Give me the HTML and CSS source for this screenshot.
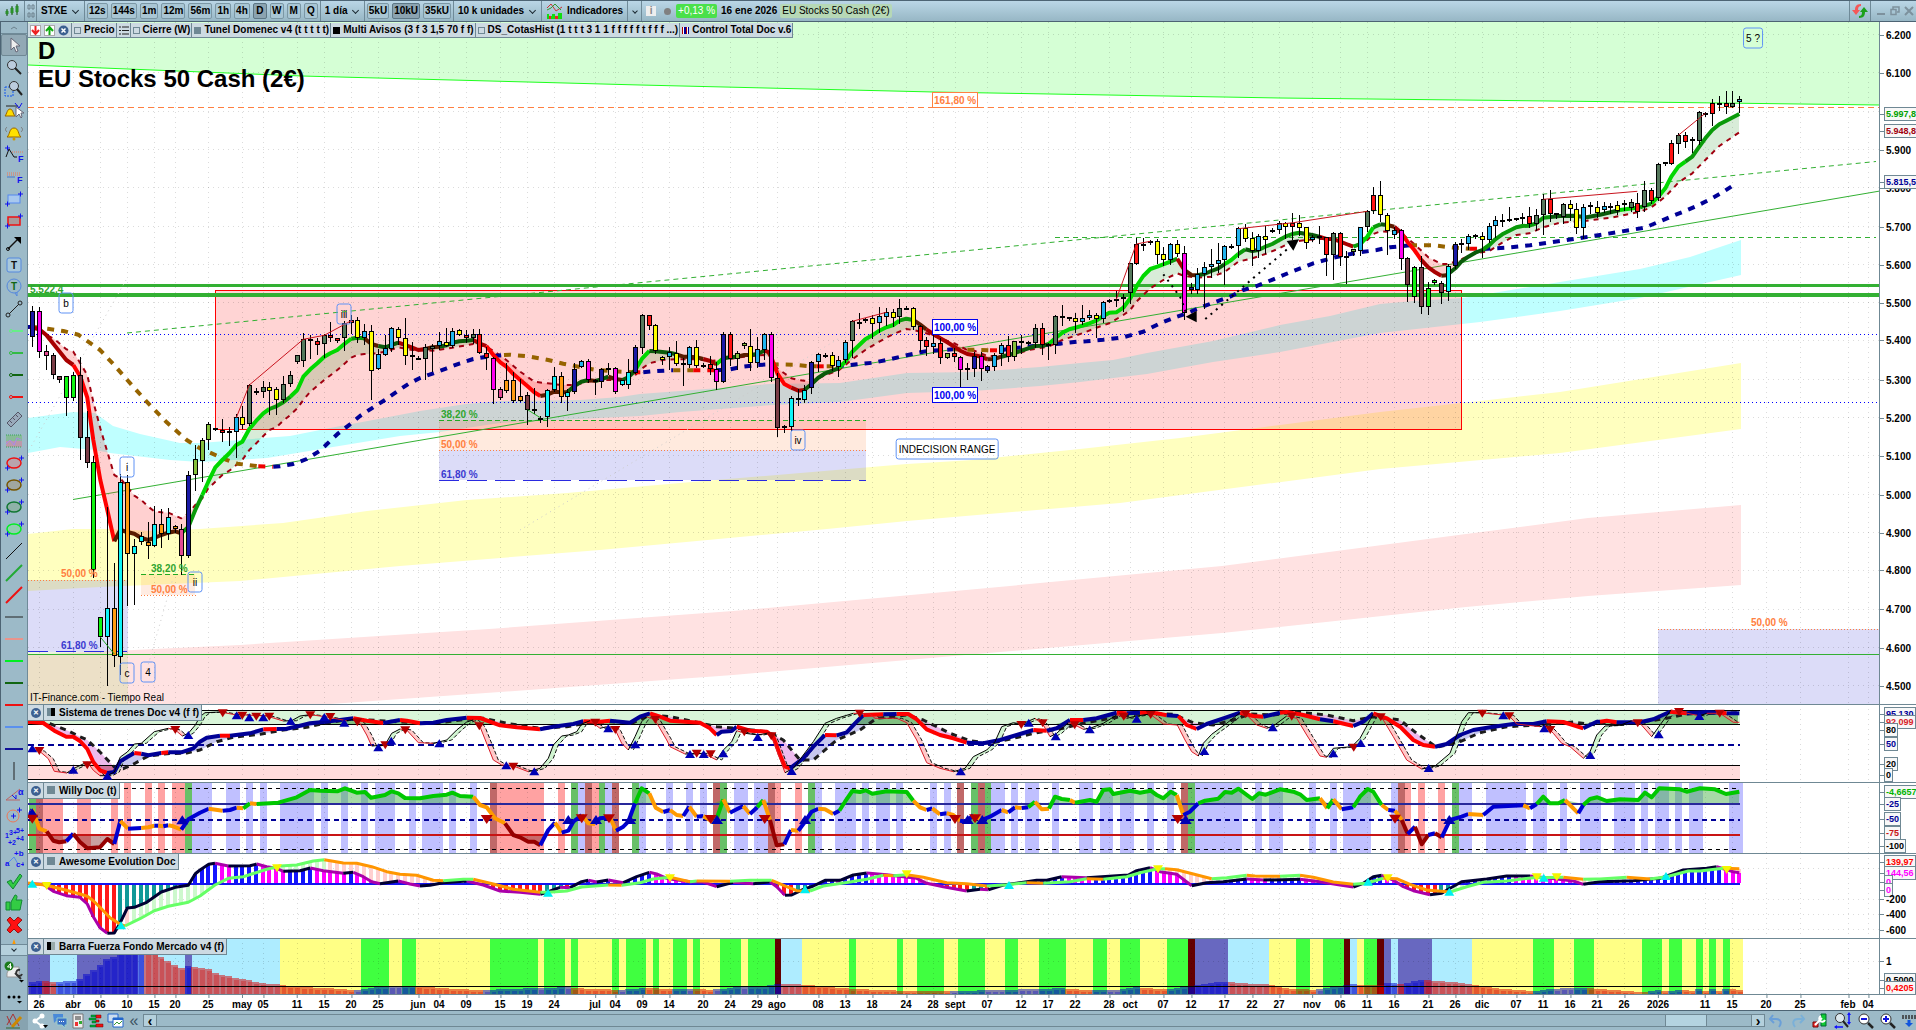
FILE: index.html
```html
<!DOCTYPE html>
<html lang="es">
<head>
<meta charset="utf-8">
<title>EU Stocks 50 Cash (2€)</title>
<link rel="stylesheet" href="styles.css">
</head>
<body>
<header class="topbar">
  <button class="icon-btn" aria-label="Tipo de gráfico"><svg width="16" height="16" viewBox="0 0 16 16"><path d="M3 6v7M8 3v9M13 1v11" stroke="#154a15"/><path d="M2 8h2v3H2zM7 5h2v5H7zM12 3h2v6h-2z" fill="#2a9a2a" stroke="#2a8a2a"/></svg></button>
  <button class="icon-btn link" aria-label="Vincular"><svg width="8" height="16" viewBox="0 0 8 16"><path d="M1 6V2h2v4zM5 6V2h2v4zM1 14v-4h2v4zM5 14v-4h2v4z" fill="none" stroke="#6d818d"/></svg></button>
  <label class="drop"><select aria-label="Valor"><option>STXE</option></select></label>
  <div class="group">
    <button>12s</button><button>144s</button><button>1m</button><button>12m</button><button>56m</button><button>1h</button><button>4h</button><button class="on">D</button><button>W</button><button>M</button><button>Q</button>
  </div>
  <label class="drop"><select aria-label="Periodo"><option>1 día</option></select></label>
  <div class="group">
    <button>5kU</button><button class="on">10kU</button><button>35kU</button>
  </div>
  <label class="drop"><select aria-label="Unidades"><option>10 k unidades</option></select></label>
  <button class="icon-btn indicators"><svg width="17" height="18" viewBox="0 0 17 18"><path d="M1 6l4-4 5 7 6-4" fill="none" stroke="#c33"/><path d="M1 8l4-2 4-4 6 6" fill="none" stroke="#393"/><path d="M1 17v-5h2v2h3v-2h3v2h3v-3h4v6z" fill="#1d1"/><path d="M3 14h2v3H3zM9 14h3v3H9z" fill="#e22"/></svg>Indicadores</button>
  <button class="icon-btn more" aria-label="Más indicadores"><i class="chev"></i></button>
  <span class="info">i</span>
  <span class="dot"></span>
  <span class="badge">+0,13 %</span>
  <span class="date">16 ene 2026</span>
  <span class="name">EU Stocks 50 Cash (2€)</span>
  <span class="spacer"></span>
  <button class="icon-btn swap" aria-label="Actualizar"><svg width="18" height="16" viewBox="0 0 18 16"><path d="M10 1c-5 0-6 3-6 6H1l4 5 4-5H7c0-3 1-4 3-4z" fill="#f45858"/><path d="M8 15c5 0 6-3 6-6h3l-4-5-4 5h2c0 3-1 4-3 4z" fill="#1ca01c"/></svg></button>
  <div class="win">
    <button aria-label="Minimizar"><svg width="10" height="10" viewBox="0 0 10 10"><path d="M1 8h8" stroke="#7d919d" stroke-width="2"/></svg></button>
    <button aria-label="Restaurar"><svg width="10" height="10" viewBox="0 0 10 10"><path d="M1 3.500h5v5H1zM3 3V1h6v5H7" fill="none" stroke="#7d919d" stroke-width="1.500"/></svg></button>
    <button aria-label="Cerrar"><svg width="10" height="10" viewBox="0 0 10 10"><path d="M1 1l8 8M9 1L1 9" stroke="#7d919d" stroke-width="2"/></svg></button>
  </div>
</header>

<main class="desk">
  <nav class="tools" aria-label="Herramientas de dibujo">
    <button class="fold" aria-label="Subir"><svg width="8" height="5" viewBox="0 0 8 5"><path d="M1 4l3-2 3 2" fill="none" stroke="#6d818d"/></svg></button>
    <div class="tool-list" id="tools"></div>
    <button class="fold down" aria-label="Bajar"><i class="chev"></i></button>
    <button class="tool tall" aria-label="Objetos"><svg width="22" height="22" viewBox="0 0 22 22"><path d="M7 6h9v10H4v-4z" fill="#eee" stroke="#999"/><circle cx="6" cy="5" r="4.500" fill="#1a7a1a"/><path d="M7.500 8V2.500L4.500 6H9" fill="none" stroke="#fff"/><path d="M12 12l6 6M17 9a3 3 0 1 0 2 4" fill="none" stroke="#333" stroke-width="2"/><path d="M16 19h5l-2.500 2.500z"/></svg></button>
    <button class="tool" aria-label="Más"><svg width="20" height="12" viewBox="0 0 20 12"><circle cx="5" cy="4" r="1.500"/><circle cx="10" cy="4" r="1.500"/><circle cx="15" cy="4" r="1.500"/><path d="M13 8h5l-2.500 2.500z"/></svg></button>
  </nav>

  <div class="work">
    <section class="panel price" id="price">
      <div class="plot"></div><div class="axis"></div>
      <ul class="tabs">
        <li class="bare"><svg width="11" height="11" viewBox="0 0 11 11"><rect x=".5" y=".5" width="10" height="10" fill="#fff" stroke="#aaa"/><path d="M5.500 1v8M2 5l3.500 4L9 5" stroke="#e22" stroke-width="2" fill="none"/></svg>
          <svg width="11" height="11" viewBox="0 0 11 11"><rect x=".5" y=".5" width="10" height="10" fill="#fff" stroke="#aaa"/><path d="M5.500 10V2M2 6l3.500-4L9 6" stroke="#1a1" stroke-width="2" fill="none"/></svg>
          <svg width="11" height="11" viewBox="0 0 11 11"><circle cx="5.500" cy="5.500" r="5" fill="#3c6090"/><path d="M3.500 3.500l4 4M7.500 3.500l-4 4" stroke="#fff" stroke-width="1.500"/></svg></li>
        <li><i class="sq"></i>Precio</li>
        <li><svg width="10" height="9" viewBox="0 0 10 9"><path d="M0 1h2M0 4.500h2M0 8h2M3 1h7M3 4.500h7M3 8h7" stroke="#222"/></svg></li>
        <li><i class="sq"></i>Cierre (W)</li>
        <li><i class="sq grey"></i>Tunel Domenec v4 (t t t t t)</li>
        <li><i class="sq black"></i>Multi Avisos (3 f 3 1,5 70 f f)</li>
        <li><i class="sq"></i>DS_CotasHist (1 t t t 3 1 1 f f f f f t f f f ...)</li>
        <li><i class="sq bars"></i>Control Total Doc v.6</li>
      </ul>
      <h1 class="heading">D<br>EU Stocks 50 Cash (2€)</h1>
      <p class="source">IT-Finance.com - Tiempo Real</p>
    </section>
    <section class="panel trains" id="trains"><div class="plot"></div><div class="axis"></div>
      <h2 class="chip"><span class="x">✕</span><span><i class="sq half"></i>Sistema de trenes Doc v4 (f f)</span></h2></section>
    <section class="panel willy" id="willy"><div class="plot"></div><div class="axis"></div>
      <h2 class="chip"><span class="x">✕</span><span><i class="sq grey"></i>Willy Doc (t)</span></h2></section>
    <section class="panel awesome" id="awesome"><div class="plot"></div><div class="axis"></div>
      <h2 class="chip"><span class="x">✕</span><span><i class="sq grey"></i>Awesome Evolution Doc</span></h2></section>
    <section class="panel force" id="force"><div class="plot"></div><div class="axis"></div>
      <h2 class="chip"><span class="x">✕</span><span><i class="sq halfb"></i>Barra Fuerza Fondo Mercado v4 (f)</span></h2></section>
    <div class="dates"><div class="days" id="days"></div></div>
  </div>
</main>

<footer class="bottombar">
  <button class="pen" aria-label="Dibujar"><svg width="20" height="18" viewBox="0 0 20 18"><path d="M3 4l4 9M3 13L9 2l6 12" fill="none" stroke="#a33"/><path d="M8 15l9-10" stroke="#c80" stroke-width="3"/><path d="M2 16h14" stroke="#363"/></svg></button>
  <button aria-label="Compartir"><svg width="18" height="16" viewBox="0 0 18 16"><path d="M4 8l7-5M4 8l7 5" stroke="#fff" stroke-width="2"/><circle cx="4" cy="8" r="2.500" fill="#fff"/><circle cx="11" cy="3" r="2.500" fill="#fff"/><circle cx="11" cy="13" r="2.500" fill="#fff"/><path d="M12 12h5l-2.500 3z"/></svg></button>
  <button aria-label="Chat"><svg width="16" height="16" viewBox="0 0 16 16"><path d="M1 1h10v7H4l-2 2z" fill="#4a8ad8"/><path d="M5 5h10v7h-2v3l-3-3H5z" fill="#3a72c8" stroke="#9cc"/><path d="M7 8.500h6" stroke="#fff" stroke-dasharray="1 1"/></svg></button>
  <button aria-label="Informe"><svg width="14" height="16" viewBox="0 0 14 16"><path d="M2 1h10v14H2z" fill="#eee" stroke="#777"/><path d="M4 4h6M4 6h6" stroke="#333"/><path d="M4 9h3v4H4z" fill="#e33"/><path d="M8 8h3v3H8z" fill="#3a3"/></svg></button>
  <button aria-label="Órdenes"><svg width="16" height="16" viewBox="0 0 16 16"><path d="M3 2h5v2H3zM1 5h7v2H1zM4 8h4v2H4zM2 12h6v2H2z" fill="#0a3" stroke="#063" stroke-width=".500"/><path d="M8 2h5v3H8zM8 7h3v2H8zM8 11h7v3H8z" fill="#e11" stroke="#700" stroke-width=".500"/></svg></button>
  <button aria-label="Ventanas"><svg width="18" height="16" viewBox="0 0 18 16"><path d="M1 1h10v8H1z" fill="#cde" stroke="#26c"/><path d="M6 5h10v9H6z" fill="#fff" stroke="#26c"/><path d="M6 6h10" stroke="#26c" stroke-width="2"/><path d="M7 12l3-3 2 2 3-3" stroke="#393" fill="none"/></svg></button>
  <button class="dbl" aria-label="Contraer">«</button>
  <div class="scroll"><button aria-label="Izquierda">‹</button><span class="track"><span class="thumb"></span></span><button aria-label="Derecha">›</button></div>
  <div class="right">
    <button aria-label="Deshacer"><svg width="16" height="16" viewBox="0 0 16 16"><path d="M5 2L2 6l4 4M2 6h6c5 0 6 4 3 8" fill="none" stroke="#6a9fd8" stroke-width="2"/></svg></button>
    <button aria-label="Rehacer"><svg width="16" height="16" viewBox="0 0 16 16"><path d="M11 2l3 4-4 4M14 6H8c-5 0-6 4-3 8" fill="none" stroke="#7ab0d8" stroke-width="2"/></svg></button>
    <button aria-label="Ajustes"><svg width="16" height="16" viewBox="0 0 16 16"><path d="M9 1h5v12H9z" fill="#1c3" stroke="#063"/><path d="M1 9h5v5H1z" fill="#e33" stroke="#700"/><path d="M3 12l7-7M9 3a3 3 0 1 0 4 4" stroke="#fff" stroke-width="2" fill="none"/></svg></button>
    <button aria-label="Zoom auto"><svg width="18" height="18" viewBox="0 0 18 18"><circle cx="6" cy="6" r="4.500" fill="#dce8ee" stroke="#333"/><path d="M9 9l5 6" stroke="#222" stroke-width="2"/><path d="M15 2v9M1 15h8" stroke="#11f" stroke-width="1.500"/><path d="M13 3l2-3 2 3zM13 10l2 3 2-3zM3 13l-3 2 3 2z" fill="#11f"/></svg></button>
    <button aria-label="Alejar"><svg width="16" height="16" viewBox="0 0 16 16"><circle cx="6" cy="6" r="5" fill="#fff" stroke="#333"/><path d="M10 10l5 5" stroke="#222" stroke-width="2.500"/><path d="M3 6h6" stroke="#11d" stroke-width="2"/></svg></button>
    <button aria-label="Acercar"><svg width="16" height="16" viewBox="0 0 16 16"><circle cx="6" cy="6" r="5" fill="#fff" stroke="#333"/><path d="M10 10l5 5" stroke="#222" stroke-width="2.500"/><path d="M3 6h6M6 3v6" stroke="#11d" stroke-width="2"/></svg></button>
    <button aria-label="Teclado"><svg width="14" height="14" viewBox="0 0 14 14"><path d="M0 2h14M0 4h14" stroke="#333" stroke-dasharray="2 1" stroke-width="1.500"/><path d="M7 6v4" stroke="#15d" stroke-width="3"/><path d="M3 9h8l-4 4z" fill="#15d"/></svg></button>
  </div>
</footer>
<script src="chart.js"></script>
</body>
</html>
```

FILE: styles.css
```css
* { box-sizing: border-box; }

html, body { height: 100%; margin: 0; }

body {
  display: flex;
  flex-direction: column;
  overflow: hidden;
  background: #9cbac8;
  color: #000;
  font: bold 10px/14px "Liberation Sans", Arial, sans-serif;
}

button, select {
  margin: 0;
  padding: 0;
  border: 0;
  background: none;
  color: inherit;
  font: inherit;
}

svg { flex: none; }

/* top bar */
.topbar {
  display: flex;
  align-items: stretch;
  flex: none;
  height: 22px;
  border-top: 1px solid #4d6474;
  border-bottom: 1px solid #4d6474;
  background: linear-gradient(#bad6e6, #97b7c5);
  white-space: nowrap;
}

.icon-btn {
  display: flex;
  align-items: center;
  justify-content: center;
  gap: 4px;
  padding: 0 4px;
  border-right: 1px solid #6f8a98;
}

.icon-btn.link { width: 12px; }
.icon-btn.more { width: 14px; padding: 0; }
.icon-btn.indicators { padding: 0 4px; }

.drop {
  display: flex;
  align-items: center;
  position: relative;
  border-right: 1px solid #6f8a98;
}

.drop select {
  appearance: none;
  height: 20px;
  padding: 0 16px 0 4px;
}

.drop::after, .chev {
  content: "";
  width: 4px;
  height: 4px;
  border: solid #1c2a33;
  border-width: 0 1px 1px 0;
  transform: rotate(45deg);
}

.drop::after {
  position: absolute;
  right: 6px;
  top: 7px;
}

.group {
  display: flex;
  align-items: center;
  gap: 3px;
  padding: 0 2px;
  border-right: 1px solid #6f8a98;
}

.group button {
  min-width: 14px;
  height: 16px;
  padding: 0 1px;
  border: 1px solid #7b97a5;
  border-radius: 2px;
  background: #a9c6d4;
}

.group .on { background: #8ba3b0; border-color: #5d7785; }

.info {
  align-self: center;
  width: 10px;
  height: 10px;
  margin-left: 4px;
  background: #eee;
  color: #888;
  line-height: 10px;
  text-align: center;
}

.dot {
  align-self: center;
  width: 7px;
  height: 7px;
  margin: 0 5px 0 8px;
  border-radius: 50%;
  background: #808080;
}

.badge {
  align-self: center;
  padding: 0 2px;
  border-radius: 2px;
  background: #4ae04a;
  color: #fff;
  font-weight: normal;
}

.date { align-self: center; margin: 0 3px 0 4px; }

.name {
  align-self: center;
  padding: 0 2px;
  border-radius: 2px;
  background: #b6d8b6;
  font-weight: normal;
}

.spacer { flex: 1; }
.swap { padding: 0 1px; border-left: 1px solid #6f8a98; }
.win { display: flex; align-items: center; gap: 4px; padding: 0 2px 0 5px; }
.win button { display: flex; }

/* middle */
.desk { display: flex; flex: 1; min-height: 0; }

.tools {
  display: flex;
  flex-direction: column;
  flex: none;
  width: 28px;
  border-left: 1px solid #4d6474;
  border-right: 1px solid #6f8a98;
  background: #9cbac8;
}

.fold {
  display: flex;
  align-items: center;
  justify-content: center;
  flex: none;
  height: 12px;
  border-bottom: 1px solid #6f8a98;
}

.fold.down { border-top: 1px solid #6f8a98; background: #b4d0dc; }
.fold.down .chev { margin-bottom: 2px; }
.tool-list { flex: 1; min-height: 0; overflow: hidden; }

.tool {
  display: flex;
  align-items: center;
  justify-content: center;
  flex: none;
  width: 26px;
  height: 22px;
}

.tool.on { border: 1px solid #6f8894; border-radius: 2px; background: #92a9b5; }
.tool.tall { height: 32px; }

.work {
  display: flex;
  flex-direction: column;
  flex: 1;
  min-width: 0;
  background: #fff;
}

.panel { display: flex; position: relative; min-height: 0; }
.panel + .panel::after {
  content: "";
  position: absolute;
  inset: 0 0 auto;
  height: 1px;
  background: #6f8894;
}

.price { flex: 682 0 0; }
.trains { flex: 78 0 0; }
.willy { flex: 71 0 0; }
.awesome { flex: 85 0 0; }
.force { flex: 56 0 0; }

.plot { flex: 1; position: relative; min-width: 0; overflow: hidden; }
.plot svg { display: block; position: absolute; width: 100%; height: 100%; }

.axis {
  flex: none;
  position: relative;
  width: 37px;
  overflow: hidden;
  border-left: 1px solid #6f8894;
}

.mark {
  position: absolute;
  left: 0;
  height: 14px;
  padding-left: 6px;
  line-height: 16px;
  white-space: nowrap;
  transform: translateY(-50%);
}

.mark::before {
  content: "";
  position: absolute;
  left: 0;
  top: 7px;
  width: 4px;
  height: 1px;
  background: #6f8894;
}

.mark.box {
  left: 4px;
  padding: 0 1px;
  border: 1px solid #6f8894;
  background: #f8f8f8;
  font-size: 9px;
  line-height: 13px;
}

.mark.box::before { left: -5px; top: 6px; }

.tag {
  position: absolute;
  height: 14px;
  line-height: 16px;
  white-space: nowrap;
  transform: translateY(-50%);
}
.tag.box {
  height: 16px;
  padding: 0 1px;
  border: 1px solid;
  background: #fff;
}
.note {
  position: absolute;
  min-width: 15px;
  height: 21px;
  padding: 0 2px;
  border: 1px solid #5f92f5;
  border-radius: 3px;
  font-weight: normal;
  line-height: 20px;
  text-align: center;
  white-space: nowrap;
  transform: translate(-50%, -50%);
}

.tabs {
  display: flex;
  position: absolute;
  left: 0;
  top: 1px;
  margin: 0;
  padding: 0;
  border-bottom: 1px solid #6f8894;
  background: #cddae2;
  list-style: none;
  white-space: nowrap;
}

.tabs li {
  display: flex;
  align-items: center;
  gap: 3px;
  height: 14px;
  padding: 0 1px 0 2px;
  border-right: 1px solid #6f8894;
}
.tabs .bare { padding: 0 2px; }

.sq {
  display: inline-block;
  flex: none;
  width: 7px;
  height: 7px;
  border: 1px solid #6f8894;
}
.sq.grey { background: #6f8894; }
.sq.black { background: #000; border-color: #000; }
.sq.half { border: 0; background: linear-gradient(90deg, #6f8894 50%, #000 50%); }
.sq.halfb { border: 0; background: linear-gradient(90deg, #000 50%, #9aa 50%); }
.sq.bars { border: 0; background: repeating-linear-gradient(90deg, #a00 0 1px, #fff 1px 2px, #009 2px 4px); }

.heading {
  position: absolute;
  left: 10px;
  top: 15px;
  margin: 0;
  font-size: 24px;
  line-height: 28px;
}

.source {
  position: absolute;
  left: 2px;
  bottom: 0;
  margin: 0;
  font-weight: normal;
  line-height: 12px;
}

.chip {
  display: flex;
  position: absolute;
  left: 0;
  top: 1px;
  z-index: 1;
  margin: 0;
  border: solid #6f8894;
  border-width: 0 1px 1px 0;
  background: #cddae2;
  font-size: 10px;
  line-height: 15px;
}
.chip span { padding: 0 2px 0 3px; }
.chip .sq { width: 8px; height: 8px; margin-right: 4px; }
.chip .x {
  width: 10px;
  height: 10px;
  margin: 3px 2px 2px 3px;
  padding: 0;
  border-radius: 50%;
  background: #3c6090;
  color: #fff;
  font-size: 7px;
  line-height: 10px;
  text-align: center;
}
.chip .x + span { border-left: 1px solid #6f8894; }

.dates {
  flex: none;
  height: 16px;
  padding-right: 37px;
  border-top: 1px solid #6f8894;
}
.days { position: relative; height: 100%; }
.day { position: absolute; top: 3px; transform: translateX(-50%); }
.day::before {
  content: "";
  position: absolute;
  left: 50%;
  top: -3px;
  width: 1px;
  height: 3px;
  background: #6f8894;
}

/* bottom bar */
.bottombar {
  display: flex;
  align-items: center;
  flex: none;
  gap: 3px;
  height: 20px;
  border-top: 1px solid #4d6474;
  background: #9cbac8;
}
.bottombar button { display: flex; align-items: center; justify-content: center; }
.bottombar .pen { width: 28px; height: 19px; background: #87a3b0; }
.bottombar .dbl { width: 12px; color: #3b5361; font-size: 16px; font-weight: normal; }
.scroll {
  display: flex;
  flex: 1;
  height: 13px;
  border: 1px solid #6f8894;
  background: #9cbac8;
}
.scroll button { width: 12px; background: #b4d0dc; font-size: 14px; line-height: 8px; }
.track { display: flex; justify-content: flex-end; flex: 1; padding-right: 2%; border: solid #6f8894; border-width: 0 1px; }
.thumb { width: 42px; margin-right: 12px; border: solid #6f8894; border-width: 0 1px; background: #b4d3e0; }
.right { display: flex; align-items: center; gap: 6px; }
```

FILE: chart.js
```js
const NS = 'http://www.w3.org/2000/svg';
const LEFT = 28, WIDTH = 1851, STEP = 6.774, FIRST = 32.3, BARS = 253;

/* Each block of readings has an origin; its values are thirds of a unit. */
const read = blocks => blocks.flatMap(([ox, oy, s]) => s.trim().split(/\s+/).map(t => {
  const m = t.match(/^(-?\d+),(-?\d+)([a-zA-Z]?)$/);
  return { x: ox + m[1] / 3, y: oy + m[2] / 3, c: m[3] };
}));

function at(series, x) {
  let i = 1;
  while (i < series.length - 1 && series[i].x < x) i++;
  const a = series[i - 1], b = series[i];
  const t = b.x === a.x ? 0 : Math.max(0, Math.min(1, (x - a.x) / (b.x - a.x)));
  return a.y + (b.y - a.y) * t;
}

class Plot {
  constructor(id, top, height) {
    this.top = top; this.height = height;
    this.box = document.querySelector('#' + id + ' .plot');
    this.axis = document.querySelector('#' + id + ' .axis');
    this.svg = document.createElementNS(NS, 'svg');
    this.svg.setAttribute('viewBox', `${LEFT} ${top} ${WIDTH} ${height}`);
    this.svg.setAttribute('preserveAspectRatio', 'none');
    this.box.append(this.svg);
  }
  add(tag, attrs) {
    const e = document.createElementNS(NS, tag);
    for (const k in attrs) e.setAttribute(k, attrs[k]);
    this.svg.append(e);
  }
  rect(x0, y0, x1, y1, fill, extra) {
    this.add('rect', { x: x0, y: y0, width: Math.max(0, x1 - x0), height: Math.max(0, y1 - y0), fill, 'shape-rendering': 'crispEdges', ...extra });
  }
  line(x0, y0, x1, y1, stroke, w = 1, dash = '') {
    const crisp = x0 === x1 || y0 === y1 ? 'crispEdges' : 'auto';
    this.add('line', { x1: x0, y1: y0, x2: x1, y2: y1, stroke, 'stroke-width': w, 'stroke-dasharray': dash, 'shape-rendering': crisp });
  }
  poly(points, attrs) {
    this.add('polyline', { points: points.map(p => p.x.toFixed(1) + ',' + p.y.toFixed(1)).join(' '), fill: 'none', ...attrs });
  }
  area(points, fill) { this.poly(points, { fill }); }
  curve(series, colors, w, dash = '') {
    let run = [series[0]], c = series[0].c;
    const flush = () => run.length > 1 && this.poly(run, { stroke: colors[c] || c, 'stroke-width': w, 'stroke-dasharray': dash, 'stroke-linejoin': 'round' });
    for (const p of series.slice(1)) {
      if (p.c && p.c !== c) { flush(); run = [run[run.length - 1]]; c = p.c; }
      run.push(p);
    }
    flush();
  }
  between(a, b, above, below, x0, x1) {
    let up = null, A = [], B = [];
    const flush = () => A.length > 1 && this.area([...A, ...B.reverse()], up ? above : below);
    for (let x = x0; x <= x1; x += 2) {
      const ya = at(a, x), yb = at(b, x), u = ya < yb;
      if (u !== up) { if (A.length) { A.push({ x, y: ya }); B.push({ x, y: yb }); } flush(); A = []; B = []; up = u; }
      A.push({ x, y: ya }); B.push({ x, y: yb });
    }
    flush();
  }
  tri(x, y, down, fill, r = 5) {
    const s = down ? -1 : 1;
    this.area([{ x: x - r, y: y + 4 * s }, { x: x + r, y: y + 4 * s }, { x, y: y - (r - 1) * s }], fill);
  }
  html(cls, x, y, text, color) {
    const e = document.createElement('span');
    e.className = cls; e.textContent = text;
    e.style.left = (x - LEFT) / WIDTH * 100 + '%';
    e.style.top = (y - this.top) / this.height * 100 + '%';
    if (color) e.style.color = color;
    this.box.append(e);
  }
  mark(y, text, color, boxed) {
    const e = document.createElement('span');
    e.className = boxed ? 'mark box' : 'mark'; e.textContent = text;
    e.style.top = (y - this.top) / this.height * 100 + '%';
    if (color) e.style.color = color;
    this.axis.append(e);
  }
}

const days = '26@39 abr@73 06@100 10@127 15@154 20@175 25@208 may@242 05@263 11@297 15@324 20@351 25@378 jun@418 04@439 09@466 15@500 19@527 24@554 jul@595 04@615 09@642 14@669 20@703 24@730 29@757 ago@777 08@818 13@845 18@872 24@906 28@933 sept@955 07@987 12@1021 17@1048 22@1075 28@1109 oct@1130 07@1163 12@1191 17@1224 22@1252 27@1279 nov@1312 06@1340 11@1367 16@1394 21@1428 26@1455 dic@1482 07@1516 11@1543 16@1570 21@1597 26@1624 2026@1658 11@1705 15@1732 20@1766 25@1800 feb@1848 04@1868'
  .split(' ').map(d => d.split('@'));
for (const [text, x] of days) {
  const e = document.createElement('span');
  e.className = 'day'; e.textContent = text;
  e.style.left = (x - LEFT) / WIDTH * 100 + '%';
  document.getElementById('days').append(e);
}
const grid = (p, ys) => {
  for (const [, x] of days) p.line(+x + .5, p.top, +x + .5, p.top + p.height, 'rgba(0,0,0,.14)', 1, '1 4');
  for (const y of ys) p.line(LEFT, y, 1880, y, 'rgba(0,0,0,.14)', 1, '1 4');
};

/* ---------- price ---------- */
const price = new Plot('price', 22, 682);
const xy = s => s.split(' ').map(t => { const [x, y] = t.split(',').map(Number); return { x, y }; });
const band = (top, bottom, fill) => price.area([...xy(top), ...xy(bottom).reverse()], fill);

band('28,418 73,412 95,413 113,426 140,434 180,443 200,443 290,436 330,428 373,420 420,411 466,404 500,401 580,400 620,397 640,394 680,391 770,384 840,383 907,373 973,372 1040,367 1080,363 1113,360 1147,353 1213,341 1280,325 1330,316 1380,304 1413,301 1463,298 1560,282 1640,269 1690,257 1741,240',
  '28,453 60,447 95,450 110,453 170,460 200,462 267,458 333,447 400,436 440,432 500,423 600,418 640,416 680,412 773,405 840,402 907,393 973,391 1040,386 1080,382 1147,374 1213,362 1280,352 1380,333 1480,322 1560,311 1640,298 1741,275', '#bfffff');
band('28,534 73,529 110,529 150,531 200,529 283,523 367,511 467,500 567,493 680,483 907,464 973,460 1080,449 1180,438 1280,425 1380,412 1480,401 1560,392 1741,363',
  '28,591 100,587 240,581 400,566 600,550 827,529 907,521 1120,503 1380,469 1560,453 1741,429', '#ffffbf');
band('28,655 240,645 489,629 733,611 977,589 1222,566 1466,534 1588,518 1741,505',
  '28,720 330,704 500,692 733,675 977,654 1222,633 1466,607 1588,596 1741,585', '#ffe2e2');

const roof = xy('28,65 302,76 640,85 934,92 1280,98 1640,102 1880,105');
price.area([{ x: 28, y: 22 }, { x: 1880, y: 22 }, ...[...roof].reverse()], '#d5ffd5');

price.rect(28, 580, 127.5, 652, 'rgba(80,80,220,.2)');
price.rect(28, 652, 127.5, 704, 'rgba(180,220,120,.25)');
price.rect(141, 574, 195, 595, 'rgba(255,130,60,.15)');
price.rect(439, 420, 866, 450, 'rgba(255,130,60,.17)');
price.rect(439, 450, 866, 480, 'rgba(80,80,220,.2)');
price.rect(1658, 629, 1880, 704, 'rgba(80,80,220,.2)');
price.rect(215.5, 290.5, 1461.5, 429.5, 'rgba(255,70,70,.23)', { stroke: '#f00' });

const levels = Array.from({ length: 18 }, (_, i) => 34.5 + Math.round(i * 38.3));
grid(price, levels);

price.poly(roof, { stroke: '#1eff1e', 'stroke-width': 1 });
price.line(28, 107.5, 1880, 107.5, '#ff8040', 1, '6 4');
price.line(28, 285.5, 1880, 285.5, '#33b033', 3);
price.line(28, 295, 1880, 295, '#33b033', 4);
price.line(28, 334.5, 1880, 334.5, '#00f', 1, '1 3');
price.line(28, 402.5, 1880, 402.5, '#00f', 1, '1 3');
price.line(28, 654.5, 1880, 654.5, '#33b033');
price.line(73, 499.5, 1880, 191, '#33b033');
price.line(127, 333, 1876, 161.5, '#33b033', 1, '5 4');
price.line(1055, 237.5, 1876, 237.5, '#33b033', 1, '5 4');
for (const [a, b, c, d] of [[126, 280, 28, 452], [520, 530, 853, 330], [147, 669, 173, 578]]) price.line(a, b, c, d, '#ccc', 1, '1 4');
price.line(28, 580.5, 127, 580.5, '#ff8040', 1, '1 2');
price.line(28, 651.5, 127, 651.5, '#2a2ae0', 1, '20 8');
price.line(141, 574.5, 195, 574.5, '#2a2', 1, '5 3');
price.line(141, 595.5, 196, 595.5, '#ff8040', 1, '1 2');
price.line(439, 420.5, 866, 420.5, '#2a2', 1, '5 3');
price.line(439, 450.5, 866, 450.5, '#ff8040', 1, '1 2');
price.line(439, 480.5, 866, 480.5, '#2a2ae0', 1, '20 8');
price.line(1658, 629.5, 1880, 629.5, '#ff8040', 1, '1 2');

const fast = read([
  [0, 20, '90,921 118,928D 139,945 199,1020 220,1035D 241,1070R 262,1133 280,1260 301,1380 322,1470 343,1564 361,1530B 382,1536 403,1541 424,1554 445,1560 463,1554 484,1545 505,1538 526,1534 544,1540 565,1521G 586,1470'],
  [200, 230, '7,795 25,755L 46,712 67,690 88,670 109,645 127,635 148,597 169,572 190,550 208,537 229,529G 250,517 271,500 292,480L 310,440 331,418 352,400 373,380 391,370 412,360 433,342 454,326 472,323G 493,325 514,342B 535,348 556,352K 574,345 595,338 616,345D 637,353 655,360 676,357 697,352B 718,350 739,346K 757,338 778,334 799,332 820,330 838,340D 859,348 880,375R 901,397 919,410 940,432 961,450 982,468 1003,487 1021,498 1042,494B 1063,485 1084,487 1102,487 1123,468K 1144,455 1165,450 1186,453B 1204,448K 1225,440 1246,447B 1267,450 1285,442K 1306,420 1327,385L 1348,363 1366,364K 1387,366 1408,368 1429,373'],
  [640, 230, '130,380B 148,380 169,382 190,387 211,393D 229,403 250,385L 271,382K 292,380 313,375B 331,375 352,372K 373,362 385,366D 394,382 412,430R 433,462 454,473 475,482D 493,480 514,463K 535,443 556,430 577,422 595,415 616,395L 637,365 658,345 676,328 697,316 718,302 739,292 760,285 778,272 799,266G 820,270 841,284B 859,298 880,312D 901,325 922,337 943,350 961,362 982,372 1003,376 1024,380 1042,388 1063,387B 1084,380 1105,375K 1123,370 1144,362 1165,355 1186,348 1207,347 1225,343 1246,325L 1267,308 1288,298 1306,293 1327,287 1348,280 1369,272 1390,258 1408,248'],
  [1080, 170, '109,427 130,413 151,385 172,345 190,318 211,297 232,290 250,283 271,275 292,266G 313,300D 334,315B 352,316 373,312K 394,303 415,295 433,283 454,270L 475,252 496,238G 517,243K 535,240 556,230G 577,222 598,210 616,200 637,192 658,188 679,192K 697,195 718,200 739,207D 760,207 781,215 799,222 820,230 841,222G 862,200L 880,172 901,163G 922,165K 943,170B 964,188D 982,215R 1003,240 1024,270 1045,292D 1063,305 1084,317 1100,316B 1126,295K 1144,275 1165,260 1186,248 1207,240 1228,225G 1246,208 1267,193 1288,182 1309,172 1327,168 1348,167 1369,160 1390,143 1411,141 1440,138K 1480,137 1520,142 1560,134 1620,120'],
  [1640, 0, '0,622L 34,611G 55,590L 76,565 94,530 115,500 136,485 157,470G 178,440 196,415 217,390 238,373 259,362 298,342']
]);
const mid = read([
  [0, 20, '90,921 118,930 139,945 160,955 178,970 199,988 220,995 241,1030 262,1065 280,1145 301,1225 322,1295 343,1365 361,1375 382,1400 403,1427 424,1440 445,1460 463,1474 484,1477 505,1478 526,1487 544,1495 565,1480 586,1455'],
  [200, 230, '7,805 25,775 46,755 67,735 88,722 109,705 127,690 148,660 169,640 190,618 208,600 229,592 250,572 271,555 292,535 310,510 331,485 373,450 412,420 454,383 472,375 493,372 514,372 535,368 556,365 595,352 637,360 697,362 757,353 820,342 859,350 880,362 919,390 961,425 1003,455 1042,460 1084,465 1123,465 1165,455 1204,450 1246,450 1285,447 1306,435 1327,415 1348,400 1387,390'],
  [640, 230, '109,388 169,388 211,393 250,390 313,380 373,375 394,385 412,415 433,430 454,445 475,450 493,452 514,455 556,435 595,422 637,388 676,360 718,335 760,312 799,297 820,300 859,310 901,325 943,340 982,360 1003,362 1042,378 1084,378 1123,375 1165,360 1225,350 1267,330 1327,310 1369,293'],
  [1080, 170, '88,460 130,435 151,420 169,395 211,355 250,330 292,310 313,318 352,323 394,320 433,307 475,275 517,265 556,252 598,235 637,215 679,210 718,207 760,205 820,228 862,210 880,192 901,184 943,187 964,190 1003,222 1045,262 1084,282 1105,282 1144,268 1186,250 1228,243 1267,218 1309,195 1348,190 1390,172 1440,158 1520,152 1600,142'],
  [1640, 0, '0,635 34,622 76,590 115,548 157,520 196,480 238,438 298,397']
]);
const slow = read([
  [0, 20, '84,921n 100,921 143,926o 190,933 235,944 300,990 340,1032 382,1080 440,1145 500,1207 560,1260'],
  [200, 230, '0,655 35,670 75,688 112,701 175,709 220,710r 240,709n 280,702 320,687 360,662 380,643 415,610 450,583 480,558 520,532 550,513 590,485 625,462 660,444 700,430 740,415 780,400 820,387 860,380 912,375 930,374o 985,379 1045,390 1090,401 1140,411 1190,420 1240,424 1300,427 1330,427r 1360,424n 1410,421'],
  [640, 230, '100,421 160,421o 230,421r 270,418n 310,410 350,405 395,403 460,404o 500,408 530,409 560,409r 590,409o 600,408n 650,403 700,398 750,388 800,376 860,363 940,358 1050,361o 1080,361r 1120,355n 1180,348 1210,346 1260,341 1310,335'],
  [1080, 170, '20,514 70,509 130,502 190,485 240,460 290,440 320,430 350,417 400,398 450,380 490,360 530,348 580,328 640,303 700,280 760,263 800,254 840,247 890,240 930,232 990,226 1060,226o 1110,232 1170,236 1210,237r 1280,233n 1350,226 1440,213 1560,195'],
  [1640, 0, '14,683 55,666 92,650 130,635 170,618 206,600 243,580 281,555 292,552']
]);
price.between(fast, mid, 'rgba(60,160,60,.2)', 'rgba(255,60,60,.24)', 39, 1739);
price.curve(mid.map(p => ({ ...p, c: 'm' })), { m: '#a00010' }, 2, '5 5');
price.curve(slow, { n: '#000096', o: '#966400', r: '#f00000' }, 4, '7 7');
price.curve(fast, { '': '#600', D: '#a80000', R: '#ff0000', B: '#5a1c00', G: '#0a9a0a', L: '#00d800', K: '#0a5a0a' }, 4);

const candles = [
  [0, 20, `97,858,978,873,951n 118,862,1010,873,996m 139,975,1046,993,1008e 160,1000,1075,1005,1064w 178,1068,1085,1069,1079w 199,1068,1185,1069,1133g 220,1055,1140,1066,1133g 241,1010,1317,1066,1253w 262,1172,1340,1251,1328w 280,1308,1670,1326,1649g 301,1790,1878,1792,1850g 322,1460,1994,1765,1850c 343,1629,1937,1765,1909o 361,1362,1962,1387,1912c 382,1366,1754,1387,1603o 403,1557,1752,1579,1603c 424,1536,1573,1549,1567c 445,1507,1614,1566,1577o 463,1458,1579,1512,1577c 484,1466,1580,1513,1543o 505,1464,1557,1492,1543c 526,1516,1536,1519,1528o 544,1511,1661,1528,1609e 565,1353,1610,1365,1609n 586,1275,1411,1318,1366l`],
  [200, 230, `7,625,753,630,692l 25,577,657,583,631l 46,593,600,595,600x 67,567,632,600,610r 88,590,645,602,610u 109,552,681,561,605u 127,528,594,562,584y 148,462,585,465,583s 169,475,492,482,487r 190,453,502,472,487s 208,455,553,472,482y 229,470,553,478,511y 250,437,515,463,511s 271,423,467,436,463s 292,375,398,376,395s 310,309,407,328,392s 331,315,383,328,334s 352,325,371,334,344r 373,312,380,316,343s 391,275,334,316,325r 412,323,336,325,334r 433,272,360,280,325s 454,255,310,270,280r 472,262,337,271,325y 493,282,343,304,325u 514,286,507,303,422y 535,358,418,373,418u 556,315,375,355,374u 574,292,362,295,356u 595,292,343,298,325y 616,264,402,325,377y 637,337,417,374,378x 655,378,388,384,388x 676,343,447,352,388s 697,343,424,348,356s 718,306,358,334,347u 739,295,348,335,347y 757,295,352,304,347u 778,298,315,301,314y 799,301,335,314,325r 820,298,340,313,325s 838,297,370,313,368r 859,350,418,370,385r 880,380,518,385,479m 901,470,507,478,505e 919,400,487,451,482o 940,427,517,451,512o 961,447,514,497,512o 982,487,581,496,539w 1003,474,548,537,541x 1021,558,577,563,571w 1042,478,588,481,562c 1063,411,483,438,481c 1084,427,516,438,500o 1102,478,539,485,500c 1123,400,490,416,485n 1144,391,412,394,410u 1165,387,455,394,450m 1186,448,491,449,455o 1204,415,471,418,455n 1225,400,433,413,418x 1246,411,490,415,485m 1267,449,464,449,464c 1285,386,473,427,464c 1306,346,430,352,428n 1327,252,368,256,353s 1348,255,296,256,287r 1366,283,370,286,362y 1387,378,403,382,391y 1408,350,418,366,382u 1429,334,406,368,401y`],
  [640, 230, `130,385,465,400,406y 148,348,411,352,406u 169,331,412,352,407y 190,400,412,404,409u 211,379,433,403,418r 229,397,477,418,455m 250,306,455,313,455n 271,306,405,313,388r 292,362,417,368,388l 313,335,355,340,349l 331,297,420,349,398y 352,322,412,358,398u 373,309,388,311,360u 394,305,452,311,443m 412,430,618,443,594w 433,585,606,589,592x 454,499,600,505,590c 475,478,524,504,506x 493,465,515,479,509c 514,392,489,397,475n 535,368,423,373,397u 556,368,380,375,378x 577,365,420,375,409y 595,377,438,391,410u 616,330,396,335,391u 637,269,380,274,334s 658,248,294,275,278x 676,265,275,267,271s 697,255,325,265,281y 718,231,306,259,280u 739,235,284,247,260u 760,237,287,247,263y 778,208,278,235,260s 799,228,238,234,236x 820,232,298,235,290y 841,285,362,289,332r 859,320,375,331,350r 880,315,368,339,350u 901,325,398,340,383r 922,370,383,370,383l 943,355,393,370,382r 961,378,468,382,419m 982,400,447,415,418x 1003,365,437,378,416n 1024,365,449,378,418m 1042,405,425,408,422n 1063,370,419,374,410u 1084,338,404,346,373u 1105,318,392,346,380r 1123,332,389,334,380l 1144,316,370,333,340r 1165,333,343,336,341x 1186,283,350,295,338s 1207,278,372,295,346r 1225,340,387,342,348x 1246,256,368,259,344s 1267,225,285,259,263x 1288,260,269,262,266x 1306,250,305,265,277y 1327,225,281,265,277u 1348,240,268,256,264u 1369,248,320,256,266y 1390,212,275,217,266u 1408,207,215,210,214x 1429,183,228,208,211x`],
  [1080, 170, `130,372,422,380,388u 151,278,400,280,370s 169,204,281,222,281r 190,205,240,223,226x 211,210,222,214,220l 232,208,278,213,254y 250,230,285,253,271y 271,219,283,223,271u 292,211,257,223,251y 313,228,446,250,430m 334,340,368,352,360n 352,295,370,313,361u 373,275,415,290,313u 394,238,320,283,290u 415,219,307,271,283u 433,225,342,229,271u 454,223,234,227,230x 475,170,262,175,229u 496,162,214,175,206y 517,186,284,205,244y 535,193,260,199,244u 556,168,250,199,211y 577,174,187,181,184x 598,153,189,160,181u 616,155,204,160,172y 637,129,208,160,172r 658,136,196,160,175y 679,170,234,172,218y 697,195,212,200,209u 718,167,220,198,203r 739,200,314,202,254r 760,185,326,190,254s 781,187,285,190,260r 799,242,338,258,262x 820,237,254,238,246l 841,170,254,172,244u 862,120,184,124,172s 880,52,128,76,124r 901,33,154,76,135y 922,130,252,135,184y 943,170,204,181,196u 964,176,296,181,266m 982,261,392,265,345w 1003,288,395,290,380g 1024,257,428,290,412w 1045,337,432,355,412g 1063,328,342,331,338g 1084,333,399,338,370w 1105,283,390,289,367c 1126,215,294,223,289n 1144,207,247,220,224x 1165,193,237,199,221u 1186,193,205,196,200x 1207,187,260,199,211y 1228,160,217,169,211u 1246,139,200,151,169u 1267,133,168,150,152x 1288,111,152,147,151x 1309,145,150,145,147x 1327,130,160,140,146s 1348,110,170,139,163r 1369,118,180,136,163s 1390,73,192,88,136s 1411,60,153,88,133r 1429,130,145,130,136x 1450,100,160,103,142s 1471,90,150,103,118y 1489,100,190,118,174y 1510,102,205,112,174u 1531,96,130,106,112y 1552,92,140,112,128y 1573,95,125,108,120u 1591,98,128,108,114r 1612,94,132,104,122y 1633,90,120,100,104x 1654,86,122,96,114s 1672,70,140,100,126r`],
  [1640, 0, `13,543,632,571,622s 34,565,608,571,602r 55,489,600,493,595s 76,485,495,487,491x 94,420,492,430,491r 115,399,459,406,431s 136,397,440,406,425r 157,410,455,418,424s 178,333,433,337,422s 196,336,348,340,344r 217,297,375,310,341r 238,288,329,309,312x 259,273,338,309,320r 277,273,320,308,320s 298,288,336,298,307u`]
];
const tint = { n: '#1a1aa6', m: '#ff00f0', e: '#e24a92', w: '#7a3c46', g: '#10f510', c: '#10f4f8', o: '#ff9a10', l: '#84c03c', s: '#55785c', y: '#ffff00', r: '#ff1414', u: '#22b4ee', x: '#000' };
for (const [ox, oy, s] of candles) for (const t of s.split(' ')) {
  const [x, hi, lo, top, bottom] = t.slice(0, -1).split(',').map(Number);
  const cx = Math.floor(ox + x / 3) + .5, px = v => Math.round(oy + v / 3) + .5;
  price.line(cx, px(hi) - .5, cx, px(lo) + .5, '#000');
  price.rect(cx - 2, px(top), cx + 2, Math.max(px(top) + 1, px(bottom) - 1), tint[t.slice(-1)], { stroke: '#000' });
}
const peaks = [[[200, 230, '109,563 148,465 310,328 373,316 454,272']], [[640, 230, '637,274 739,247']], [[1080, 170, '109,388 169,222 211,214']], [[1080, 170, '475,176 640,158 862,124']], [[1080, 170, '1390,88 1672,64']], [[1640, 0, '115,406 196,340']]];
for (const p of peaks) price.poly(read(p), { stroke: '#c8141e' });
price.line(527.5, 409.7, 540.3, 417.7, '#2a2');
price.line(100.3, 637, 114.3, 654, '#2a2');
price.poly(read([[1080, 170, '250,313 283,357 304,387 318,430']]), { stroke: '#000', 'stroke-width': 2, 'stroke-dasharray': '2 5' });
price.poly(read([[1080, 170, '376,447 640,222']]), { stroke: '#000', 'stroke-width': 2, 'stroke-dasharray': '2 5' });
price.area(read([[1080, 170, '350,422 317,440 350,457']]), '#000');
price.area(read([[1080, 170, '657,208 620,213 640,242']]), '#000');

for (const [x, y, t] of [[66, 303, 'b'], [127, 467, 'i'], [195, 582, 'ii'], [127, 673, 'c'], [148, 672, '4'], [344, 314, 'iii'], [798, 440, 'iv'], [947, 449, 'INDECISION RANGE'], [1753, 38, '5 ?']]) price.html('note', x, y, t);
for (const [x, y, t, c] of [[61, 573, '50,00 %', '#ff8040'], [61, 645, '61,80 %', '#3a3ad0'], [151, 568, '38,20 %', '#2fa52f'], [151, 589, '50,00 %', '#ff8040'], [441, 414, '38,20 %', '#2fa52f'], [441, 444, '50,00 %', '#ff8040'], [441, 474, '61,80 %', '#3a3ad0'], [1751, 622, '50,00 %', '#ff8040'], [30, 289, '5.522,4', '#2fa52f']]) price.html('tag', x, y, t, c);
price.html('tag box', 932, 100, '161,80 %', '#ff8040');
price.html('tag box', 932, 327, '100,00 %', '#0000f0');
price.html('tag box', 932, 395, '100,00 %', '#0000f0');

levels.forEach((y, i) => i !== 2 && price.mark(y, String((62 - i) / 10).replace(/^(\d)$/, '$1.0') + '00'));
price.mark(114, '5.997,8', '#00a000', true);
price.mark(131, '5.948,8', '#a00010', true);
price.mark(182, '5.815,5', '#000096', true);

/* ---------- trains ---------- */
const trains = new Plot('trains', 704, 78);
trains.rect(28, 710, 1740, 724, '#d9f5d9');
trains.rect(28, 765, 1740, 779, '#ffdcdc');
grid(trains, []);
const thick = read([
  [0, 700, '84,65r 130,69 163,92 199,110 220,110 240,123 262,147 280,186 300,211 322,219 343,216n 361,184 382,171 403,159 424,161r 445,166n 484,159 505,157r 544,157n 580,145'],
  [200, 700, '0,125 20,113 60,107 90,107r 150,100n 190,88 230,87r 260,86n 300,77 330,70 370,66 420,60 460,55 500,62r 550,69 600,60n 620,62r 660,70 700,68n 740,60 800,53 840,54r 900,76 950,82 1020,88 1060,80n 1120,72 1150,64 1200,65r 1230,62 1290,68n 1320,50 1350,40 1380,50r'],
  [670, 700, '0,62 90,68 120,85 140,105 155,95n 185,93 200,80 240,92r 290,95 310,110 330,165 345,200 360,205 400,175n 430,140 465,105 500,106r 530,97n 555,70 580,45 640,43r 680,42n 715,42r 740,58 770,88 810,105 850,115 890,128 940,130n 990,120 1040,105 1090,90 1130,92r 1160,85n 1200,60 1240,60r 1280,55n 1340,38 1370,40r'],
  [1140, 700, '0,38n 50,40r 80,46 115,48n 140,75r 170,87 200,72n 250,55 300,38 340,48r 370,50 420,38n 440,36r 490,45 540,58 580,64n 640,78r 670,65n 700,40 740,55r 780,80 820,120 850,135 885,140 920,132n 960,105 1000,90 1060,80 1120,72 1180,72 1220,64 1270,66r 1330,85 1370,65n'],
  [1600, 690, '0,95 20,92r 50,97 120,97n 160,88 210,65 260,70r 320,66n 350,68 380,70r 418,70n']
]);
const signal = read([
  [0, 700, '84,64 150,71 199,90 240,110 262,120 300,156 343,201 370,206 403,191 445,168 500,161 560,159'],
  [200, 700, '0,150 50,125 100,112 180,103 250,90 320,82 380,68 460,57 540,62 640,68 720,68 800,58 850,55 920,70 1020,85 1100,80 1160,70 1230,65 1300,68 1350,45'],
  [670, 700, '0,50 60,62 140,80 200,85 290,95 340,120 390,180 430,180 500,120 570,90 620,55 710,45 760,60 840,100 900,122 960,130 1030,115 1100,98 1180,85 1240,70 1320,55 1400,42'],
  [1140, 700, '0,40 100,43 160,68 220,75 280,60 330,42 400,45 470,36 560,45 640,62 700,50 780,60 830,100 890,142 960,125 1020,98 1100,80 1200,75 1300,66 1370,75'],
  [1600, 690, '0,100 120,97 200,85 260,72 418,68']
]);
const thin = read([
  [0, 700, '97,149 118,153r 145,176 163,214 200,219 220,206k 262,186 280,211r 300,227 322,227k 343,216 361,171 382,156 403,132 424,130 463,95 505,85 526,90r 547,108 565,100k 586,75'],
  [200, 700, '0,50 15,38 60,36 110,45r 120,44k 200,48r 250,63 275,62k 300,48 330,44 375,50r 440,62 460,58k 480,70r 500,105 515,138 555,135k 575,100 600,87 620,90r 655,128 700,130 740,120k 770,90 800,66 820,60 840,80r 880,180 905,195 940,198 985,215 1020,205k 1045,175 1060,135 1085,108 1105,105 1130,95 1145,72 1170,62 1200,85r 1220,80k 1245,88r 1265,130 1285,150 1305,110k 1325,65 1340,50 1365,60r 1400,120'],
  [670, 700, '0,140 45,162 100,160k 140,180r 160,150k 185,125 200,92 225,100r 265,105k 300,98 320,150r 345,218 370,205k 400,165 430,125 465,70 500,55 550,40 600,42r 615,55 680,55 710,68 740,120 770,188 810,205 850,215 885,205k 910,170 950,150 975,125 995,80 1030,68 1055,72 1095,55 1120,75r 1140,110 1160,100k 1195,68 1215,75r 1240,88 1260,85k 1300,70 1340,45 1370,55r 1400,48k'],
  [1140, 700, '30,42 70,72r 112,75 135,120 155,155 175,168 190,130k 215,103 260,70 300,38 320,45r 350,75 380,85 400,78k 440,48 470,55r 500,105 540,168 560,172 580,145k 635,140 660,115 700,42 730,60r 760,110 800,180 845,207 885,198k 930,160 950,105 965,65 985,38 1020,38 1090,45r 1105,45 1130,72 1200,80 1215,75k 1240,100r 1265,130 1290,140 1330,175 1350,155k 1370,105 1395,78 1440,76 1475,62'],
  [1600, 690, '120,100r 155,140 180,105k 213,60 240,65r 300,78 320,70k 360,70r 400,97 418,97']
]);
trains.between(thick, signal, 'rgba(130,130,220,.45)', 'rgba(225,140,225,.6)', 28, 1739);
const over = thick.map(p => ({ x: p.x, y: Math.min(p.y, 724) })), zone = [{ x: 28, y: 724.2 }, { x: 1740, y: 724.2 }];
trains.between(over, zone, 'rgba(40,140,40,.5)', 'none', 28, 1739);
trains.area([...thick.map(p => ({ x: p.x, y: Math.max(p.y, 765) })), { x: 1739, y: 765 }, { x: 28, y: 765 }], 'rgba(160,30,60,.4)');
const late = thin.map(p => ({ x: p.x + 5, y: p.y, c: 'k' })).filter(p => p.x < 1740);
trains.between(thin, late, 'rgba(140,230,140,.4)', 'rgba(255,120,120,.4)', 40, 1739);
for (const y of [710.5, 724.5, 765.5, 779.5]) trains.line(28, y, 1740, y, '#000');
trains.line(28, 744.5, 1740, 744.5, '#000096', 2, '6 4');
trains.curve(late, { k: '#111' }, 1, '4 2');
trains.curve(signal.map(p => ({ ...p, c: 'k' })), { k: '#1c1c1c' }, 3, '6 5');
trains.curve(thick, { r: '#ff0000', n: '#000096' }, 4);
trains.curve(thin, { '': '#111', k: '#000', r: '#d81e28' }, 1);
const flags = (p, blocks, up, down, r) => read(blocks).forEach(t => p.tri(t.x, t.y, t.c === 'd', t.c === 'd' ? down : up, r));
flags(trains, [
  [0, 700, '97,145u 118,153d 220,209u 262,196d 322,227u 526,90d 565,105u'],
  [200, 700, '68,40d 110,46u 127,47d 148,52u 169,50d 190,52u 208,50d 272,63u 331,46d 373,51u 391,51d 433,68u 472,67d 535,142u 556,136d 574,122u 616,91d 718,130u 838,79d 919,196u 940,200d 1003,214u 1186,68d 1225,85u 1246,90d 1306,133u 1366,60d'],
  [670, 700, '60,162u 80,161d 101,162u 122,163d 160,160u 223,97d 263,111u 304,109d 365,213u 569,41d 872,214u 1054,75d 1076,68u 1118,70d 1157,109u 1214,76d 1259,88u 1361,50d 1400,56u'],
  [1140, 700, '32,45d 193,153u 317,43d 398,82u 455,50d 580,160u 641,143d 662,129u 722,52d 866,204u 1027,41d 1090,46u 1108,49d 1213,85u 1231,90d 1351,165u 1493,70d'],
  [1600, 690, '176,133u 237,66d 298,78u 359,71d']
], '#0000b4', '#b40000');
trains.mark(714, '95,130', '#000096', true);
trains.mark(722, '92,099', '#d81e28', true);
trains.mark(730, '80', '', true);
trains.mark(744, '50', '#000096', true);
trains.mark(764, '20', '', true);
trains.mark(775, '0', '', true);

/* ---------- willy ---------- */
const willy = new Plot('willy', 782, 71);
const stripes = (p, blocks, colors) => blocks.forEach(([ox, s]) => s.split(' ').forEach(t => {
  const m = t.match(/(\d+)-(\d+)(\w)/);
  p.rect(Math.round(ox + m[1] / 3), p.top, Math.round(ox + m[2] / 3), p.top + p.height, colors[m[3]]);
}));
stripes(willy, [
  [0, '88-108g 108-129b 129-189p 231-273p 333-354p 372-393p 435-456p 474-495p 516-555p 555-576g 576-636l'],
  [200, '78-120l 138-159l 180-201l 240-342l 363-384l 423-444l 483-504l 525-585l 627-648l 666-729l 747-768l 810-831l 870-891b 891-1032p 1074-1095p 1113-1134g 1134-1155l 1155-1176b 1176-1197p 1197-1215g 1215-1236l 1236-1257b 1296-1317g 1317-1338l 1398-1419l'],
  [670, '48-69l 90-111l 129-150b 150-171g 192-234l 252-294l 294-315b 315-333p 375-396p 414-435g 435-456l 495-558l 576-597l 618-660l 678-699l 780-801l 822-843l 861-882b 903-924g 924-945b 945-963g 963-1005l 1023-1044l 1065-1107l 1146-1167l 1227-1269l 1290-1329l 1350-1392l'],
  [1140, '21-42l 81-102l 123-144b 144-165g 165-306l 345-366l 387-429l 507-528l 570-591l 609-693l 753-774l 774-795b 795-813p 834-855p 894-915p 936-957g 957-996l 1038-1158l 1179-1221l 1260-1281l 1320-1383l'],
  [1600, '42-105l 123-144l 165-207l 225-246l 267-309l 387-429l']
], { g: '#68c068', b: '#c06868', p: '#ffa2a2', l: '#c0c0ff' });
grid(willy, []);
const wave = read([
  [0, 700, '90,343n 97,328 108,358o 118,386 140,394 160,422d 178,427 199,424 220,401n 240,426d 262,445 300,442 322,417 343,432 361,363n 384,386o 424,384n 445,382o 463,377 475,377n 490,379o 505,376n 520,379o 544,389 565,358n'],
  [200, 700, '0,338 26,326 68,332o 90,330n 110,323 130,325o 150,310g 170,312o 235,308g 290,292 330,270 360,272 412,274 435,265 470,278 495,276 513,293 555,285 575,274 595,280 615,294 660,295 700,288 740,284 757,278 780,288 820,290 840,315o 860,322 885,355 915,370 940,405d 960,412 985,425 1003,425 1021,436 1045,390n 1065,368 1085,398o 1105,392n 1120,365 1145,345 1165,370o 1185,372 1200,355n 1230,352 1248,392o 1270,380n 1285,365 1305,310 1325,265g 1348,280 1367,323o 1390,336'],
  [670, 700, '0,330n 20,345o 40,348 58,320n 80,350o 100,348n 135,370o 160,298g 180,338o 200,328n 220,318 240,342o 262,322n 280,300g 300,360o 320,436d 343,433 363,390n 385,392o 405,365n 425,335 445,326 465,328o 490,342 508,332n 525,305g 547,273 570,276 587,271 607,281 650,274 710,276 730,302 750,322o 770,330 787,325n 810,343o 830,340n 850,345o 870,362 890,365n 910,345 935,360o 960,350n 995,330 1015,337o 1035,322n 1055,324o 1075,322n 1095,305g 1115,328o 1137,326 1155,290g 1175,297 1200,300 1215,308o 1260,300g 1280,305 1300,270 1320,268 1330,282 1380,272 1400,276'],
  [1140, 700, '0,278 32,272 50,285 70,295 92,275 110,285 130,345o 150,335n 175,310 195,302g 235,296 255,276 275,278 295,266 337,297 357,280 377,284 420,268 460,275 480,283 500,300 540,295 562,325o 580,298g 605,328o 640,322n 660,290g 683,267 700,275 725,315 745,330o 765,332n 785,360o 803,402d 825,380n 845,433d 865,405 885,400n 905,412d 930,360n 965,350 985,342 1030,345o 1060,320n 1150,316 1170,325o 1190,312n 1210,290g 1230,310 1255,310 1275,300 1315,340o 1330,315n 1350,297g 1372,292'],
  [1600, 690, '0,325 20,333 60,328 115,330 135,308 155,322 178,295 240,298 260,305 300,295 345,298 378,312 418,305']
]);
willy.area([...wave.map(p => ({ x: p.x, y: Math.min(p.y, 803) })), { x: 1739, y: 803 }, { x: 30, y: 803 }], 'rgba(60,170,60,.45)');
willy.area([...wave.map(p => ({ x: p.x, y: Math.max(p.y, 834) })), { x: 1739, y: 834 }, { x: 30, y: 834 }], 'rgba(120,20,20,.4)');
willy.line(28, 788.5, 1740, 788.5, '#000', 1, '4 4');
willy.line(28, 849.5, 1740, 849.5, '#000', 1, '4 4');
willy.line(28, 803.5, 1740, 803.5, '#28289a', 2);
willy.line(28, 819.5, 1740, 819.5, '#000096', 2, '5 4');
willy.line(28, 834.5, 1740, 834.5, '#c81414', 2);
willy.curve(wave, { n: '#0000d2', o: '#ff9a00', g: '#00c800', d: '#960000' }, 4);
flags(willy, [
  [0, 700, '97,340u 97,356d 547,361u'],
  [200, 700, '860,357d 1105,360u 1145,355d 1188,360u 1227,355d 1290,360u'],
  [670, 700, '122,357d 141,360u 284,357d 405,360u 855,357d 893,360u 915,355d 937,360u'],
  [1140, 700, '113,357d 137,360u 765,356d 928,360u']
], '#0000b4', '#b40000', 6);
willy.mark(792, '-4,6657', '#00b400', true);
willy.mark(804, '-25', '#000096', true);
willy.mark(819, '-50', '#000096', true);
willy.mark(833, '-75', '#c81414', true);
willy.mark(846, '-100', '', true);

/* ---------- awesome ---------- */
const awesome = new Plot('awesome', 853, 85);
grid(awesome, [868.5, 899.5, 914.5, 929.5]);
const main = read([
  [0, 700, '84,551 130,553 160,574 199,587 240,592 262,612 280,650 300,683 322,700 343,699 361,668 382,624 403,622 440,607 484,576 526,562 565,556 586,521'],
  [200, 700, '0,510 26,493 45,490 85,498 150,497 170,492 200,500 230,505 250,514 300,512 331,504 370,512 430,520 460,517 490,530 515,545 540,551 595,543 630,552 660,558 690,556 730,548 800,543 850,555 900,573 960,577 1021,583 1045,575 1080,562 1110,563 1145,545 1165,541 1190,546 1225,540 1270,548 1310,530 1348,517 1370,522 1400,535'],
  [670, 700, '0,537 60,545 100,546 140,560 190,547 250,551 300,545 320,560 345,586 365,585 400,568 430,558 465,541 510,541 550,525 590,519 650,524 700,530 740,535 770,550 820,560 890,573 930,568 955,569 1000,555 1060,547 1100,541 1130,541 1175,530 1250,533 1340,527 1375,525 1400,512'],
  [1140, 700, '30,503 60,515 110,523 155,557 200,548 250,545 320,537 370,540 430,539 480,538 540,545 600,555 640,561 670,550 700,530 725,526 760,540 790,560 820,572 870,584 905,580 930,565 965,545 1040,537 1100,528 1170,528 1230,535 1300,543 1330,553 1370,547'],
  [1600, 690, '0,575 100,572 180,565 250,540 320,535 350,530 400,545 418,548']
]);
const trail = read([
  [0, 700, '84,549 140,556 199,571 240,582 262,589 280,602 300,622 330,653 361,673 375,678 420,656 463,632 505,619 565,607'],
  [200, 700, '0,588 45,555 85,535 130,530 200,508 240,498 290,495 340,483 373,479 430,489 470,490 515,500 560,515 600,523 650,526 700,541 730,542 790,538 820,538 880,552 940,568 1021,577 1045,577 1100,573 1145,561 1225,555 1265,556 1320,548 1360,537'],
  [670, 700, '0,532 60,545 80,543 180,544 240,541 305,541 350,560 380,572 420,573 460,558 540,546 590,538 640,526 670,527 710,524 760,532 830,548 890,551 950,558 1010,554 1070,548 1120,550 1200,545 1250,536 1300,538 1370,530'],
  [1140, 700, '0,518 50,507 75,506 110,509 160,522 215,536 260,533 320,526 345,528 420,529 480,526 520,532 580,546 640,553 680,550 730,535 770,536 810,553 860,570 930,576 980,560 1030,547 1100,543 1180,533 1270,532 1330,538 1370,537'],
  [1600, 690, '0,567 80,562 150,567 200,560 265,543 300,543 370,535 418,536']
]);
for (let i = 0; i < BARS; i++) {
  const x = FIRST + STEP * i, y = at(main, x), t = at(trail, x);
  const rising = y < at(main, x - STEP), soft = t < at(trail, x - STEP) ? '#cdf8cd' : '#ffd0d0';
  awesome.rect(Math.round(x) - 2, Math.min(y, t), Math.round(x) + 2, Math.max(y, t), soft);
  const fill = y < 883 ? (rising ? '#1414ff' : '#ff00ff') : (rising ? '#109898' : '#ff1818');
  awesome.rect(Math.round(x) - 2, Math.min(y, 883), Math.round(x) + 2, Math.max(y, 883), fill);
}
awesome.line(28, 883.5, 1740, 883.5, '#1414f0', 2);
const toned = (s, up, down) => s.map((p, i) => ({ ...p, c: i && p.y <= s[i - 1].y ? up : down }));
awesome.curve(toned(main, '#000032', '#aa00aa'), {}, 3);
awesome.curve(toned(trail, '#66ff66', '#ff9600'), {}, 3);
flags(awesome, [
  [0, 700, '97,551u 140,558d 363,676u'],
  [200, 700, '231,505d 1044,578u 1410,535d'],
  [670, 700, '405,568u 710,523d 1017,555u 1464,508d'],
  [1140, 700, '684,545u 743,535d 928,575u 1190,532d 1211,533u 1250,532d'],
  [1600, 690, '198,558u 380,540d']
], '#00f0f0', '#f5f500');
awesome.mark(862, '139,97', '#f00', true);
awesome.mark(873, '144,56', '#f0f', true);
awesome.mark(882, '0', '#f0f', true);
awesome.mark(890, '0', '#f0f', true);
awesome.mark(899, '-200');
awesome.mark(914, '-400');
awesome.mark(930, '-600');

/* ---------- force ---------- */
const force = new Plot('force', 938, 56);
force.rect(28, 938, 280, 994, '#aeecff');
force.rect(280, 938, 1743, 994, '#ffff85');
stripes(force, [
  [0, '84-150p 231-413p 555-576p'],
  [200, '483-567g 606-648g 870-1014g 1032-1095g 1113-1134g 1236-1257g 1278-1338g 1359-1377g'],
  [670, '9-51g 69-90g 150-213g 234-315g 315-333m 333-396l 537-558g 681-699g 741-822g 864-945g 1005-1044g 1107-1188g 1269-1311g 1350-1410g'],
  [1140, '81-144g 144-165m 165-264p 264-387l 468-510g 549-612g 612-630m 630-651l 672-711g 711-732m 732-753p 753-774l 774-876p 876-996l 1179-1242g 1302-1362g'],
  [1600, '126-186g 207-246g 288-309g 327-348g 369-390g']
], { p: '#6868c0', g: '#40ff40', l: '#aeecff', m: '#640000' });
grid(force, [961.5]);
const power = read([
  [0, 700, '84,848 108,842 150,845 230,844 240,835 262,822 280,810 300,795 322,777 343,769 361,745 410,733 430,736 470,764 500,781 526,797 544,803 565,797'],
  [200, 700, '0,802 25,808 60,825 120,835 180,847 240,855 300,860 370,864 430,868 450,871 480,870 540,860 640,858 700,862 760,866 840,871 900,868 1000,864 1100,862 1200,868 1260,869 1330,864'],
  [670, 700, '0,867 60,866 130,869 190,862 280,860 325,850 365,852 450,858 540,866 600,869 700,872 840,874 900,872 980,869 1100,868 1170,864 1250,870 1340,869 1400,862'],
  [1140, 700, '0,863 80,867 130,862 180,852 250,845 310,850 385,853 450,866 520,869 600,857 640,853 720,856 750,848 780,852 850,838 880,842 960,848 1030,860 1110,868 1180,873 1240,866 1340,864'],
  [1600, 690, '0,897 60,902 130,906 180,898 200,904 240,898 270,904 300,897 320,903 340,897 360,903 380,897 418,900']
]);
for (let i = 0; i < BARS; i++) {
  const x = FIRST + STEP * i, y = Math.round(at(power, x)), rising = at(power, x) < at(power, x - STEP);
  const c = rising ? '0,0,205' : '215,0,0', l = Math.round(x - STEP / 2), r = Math.round(x + STEP / 2);
  force.rect(l, y, r, 994, `rgba(${c},.5)`);
  force.rect(l + 2, y + 2, r, 994, `rgba(${c},.3)`);
}
force.line(28, 986.5, 1740, 986.5, '#000');
force.mark(961, '1');
force.mark(980, '0,5000', '', true);
force.mark(988, '0,4205', '#f00', true);

/* ---------- drawing tools ---------- */
const plus = (x, y) => `<path d="M${x - 2} ${y}h5M${x + .5} ${y - 2.5}v5" stroke="#11e"/>`;
const bell = '<path d="M3 14c3-2 2-9 7-9s4 7 7 9z" fill="#ffe000" stroke="#960"/><circle cx="10" cy="16" r="1.500" fill="#c90"/>';
const flat = (c, w = 2) => `<path d="M1 10h18" stroke="${c}" stroke-width="${w}"/>`;
const ray = c => `<path d="M8 10h11" stroke="${c}" stroke-width="2"/><circle cx="7" cy="10" r="1.500" fill="none" stroke="${c}"/>`;
const slope = (c, w) => `<path d="M2 18L18 2" stroke="${c}" stroke-width="${w}"/>`;
const oval = (c, f) => `<ellipse cx="10" cy="10" rx="7" ry="5" fill="${f}" stroke="${c}" stroke-width="1.500"/>` + plus(3, 15) + plus(17, 5);
const txt = (x, y, t, c, s = 9) => `<text x="${x}" y="${y}" fill="${c}" font-size="${s}">${t}</text>`;
const icons = [
  ['Seleccionar', '<path d="M7 3v12l3-3 2 5 2-1-2-5h4z" fill="#eee" stroke="#667"/>'],
  ['Zoom', '<circle cx="8" cy="8" r="4.500" fill="#bcd" stroke="#333"/><path d="M11 11l6 6" stroke="#222" stroke-width="2"/>'],
  ['Zoom zona', '<path d="M1 8h8v9H1z" fill="none" stroke="#15e" stroke-dasharray="2 1"/><circle cx="10" cy="7" r="4.500" fill="#bcd" stroke="#333"/><path d="M13 10l5 6" stroke="#222" stroke-width="2"/>'],
  ['Alerta', '<path d="M2 5h12" stroke="#222"/><path d="M11 2l4 5 3-5" stroke="#11e" fill="none"/><path d="M1 15c2-2 2-7 5-7s3 5 5 7z" fill="#fd0" stroke="#960"/><path d="M12 6v10l3-3 2 4 1-1-1-4h3z" fill="#fff" stroke="#667"/>'],
  ['Alertas', bell + '<path d="M3 4c-2 2-2 3 0 5M17 4c2 2 2 3 0 5" stroke="#777" fill="none"/>'],
  ['Fibonacci', '<path d="M2 12l3-8 5 8h3" fill="none" stroke="#111"/><path d="M8 7h12" stroke="#e75" stroke-dasharray="1 1"/>' + plus(3, 3) + txt(14, 17, 'F', '#11e', 9)],
  ['Fibonacci horizontal', '<path d="M3 6h14M3 8h14" stroke="#e75" stroke-dasharray="1 1"/><path d="M3 10h8" stroke="#47c"/>' + txt(13, 16, 'F', '#11e', 9)],
  ['Zona azul', '<rect x="4" y="6" width="12" height="8" fill="#a8c8ee" stroke="#58e"/>' + plus(3, 15) + plus(16, 5)],
  ['Zona roja', '<rect x="4" y="6" width="12" height="8" fill="#a99" stroke="#e11" stroke-width="1.500"/>' + plus(3, 15) + plus(16, 5)],
  ['Flecha', '<path d="M4 16L14 6" stroke="#111" stroke-width="1.500"/><path d="M10 4h7v7z"/><circle cx="4" cy="16" r="1.500" fill="none" stroke="#111"/>'],
  ['Texto', '<rect x="3" y="3" width="14" height="14" rx="2" fill="#a8c8dc" stroke="#58d"/>' + txt(7, 14, 'T', '#111', 10)],
  ['Globo', '<circle cx="10" cy="9" r="7" fill="none" stroke="#58d"/><path d="M11 16l2 3V15" stroke="#58d" fill="none"/>' + txt(7, 13, 'T', '#161', 10)],
  ['Segmento', '<path d="M5 15L15 5" stroke="#222"/><circle cx="4" cy="16" r="2" fill="none" stroke="#222"/><circle cx="16" cy="4" r="2" fill="none" stroke="#222"/>'],
  ['Semirrecta verde', ray('#6e8')], ['Semirrecta verde medio', ray('#3b4')], ['Semirrecta verde oscuro', ray('#161')], ['Semirrecta roja', ray('#e11')],
  ['Regla', '<path d="M3 14L14 3l4 4L7 18z" fill="#9ab" stroke="#556"/><path d="M6 12l2 2M9 9l2 2M12 6l2 2" stroke="#556"/>'],
  ['Canal', '<path d="M2 4h16v6H2z" fill="#8b9"/><path d="M2 10h16v6H2z" fill="#b9a"/><path d="M2 4h16M2 16h16" stroke="#3a5" stroke-dasharray="1 1"/><path d="M2 13l4-4 4 5 3-7 4 2" stroke="#a8e" fill="none"/>'],
  ['Elipse roja', oval('#e11', '#b9a4ac')], ['Elipse marrón', oval('#750', '#a0a79f')], ['Elipse verde', oval('#173', '#8fb2a8')], ['Elipse lima', oval('#0e2', '#92cdb0')],
  ['Línea negra', slope('#111', 1)], ['Línea verde', slope('#2a3', 2)], ['Línea roja', slope('#e11', 2)],
  ['Horizontal negra', flat('#222', 1)], ['Horizontal salmón', flat('#e9948c')], ['Horizontal lima', flat('#0e2')], ['Horizontal verde', flat('#161')], ['Horizontal roja', flat('#e11')], ['Horizontal azul', flat('#5a90ee')], ['Horizontal marino', flat('#119')],
  ['Vertical', '<path d="M10 1v18" stroke="#222"/>'],
  ['Ángulo', '<path d="M2 17L16 6M2 17h14" stroke="#b66" fill="none"/><path d="M8 12l4 4M12 12v4" stroke="#11e"/>' + txt(14, 12, 'α', '#11e', 9)],
  ['Arco', '<circle cx="9" cy="11" r="6" fill="none" stroke="#e75"/>' + plus(9, 11) + plus(15, 5)],
  ['Ondas 12345', txt(1, 11, '1', '#11e', 7) + txt(5, 8, '3+', '#11e', 7) + txt(12, 6, '5+', '#11e', 7) + txt(4, 18, '+2', '#11e', 7) + txt(12, 14, '+4', '#11e', 7)],
  ['Ondas abc', '<path d="M4 14l6-6 4 7" stroke="#58e" fill="none"/>' + txt(1, 17, 'a', '#11e', 8) + txt(10, 7, '+b', '#11e', 8) + txt(12, 18, 'c+', '#11e', 8)],
  ['Aceptar', '<path d="M3 11l4-2 2 4 7-10 2 2-9 13z" fill="#3c4" stroke="#183"/>'],
  ['Me gusta', '<path d="M2 9h4v8H2zM7 9l4-7c3 0 2 3 1 5h6l-2 10H7z" fill="#3c4" stroke="#183"/>'],
  ['Borrar', '<path d="M3 5l3-3 4 4 4-4 4 3-5 5 5 5-4 3-4-4-4 4-3-3 4-5z" fill="#f11" stroke="#911"/>'],
  ['Favorito', '<path d="M10 2l2 6h6l-5 4 2 6-5-4-5 4 2-6-5-4h6z" fill="#f90"/>']
];
document.getElementById('tools').innerHTML = icons.map(([name, art], i) =>
  `<button class="tool${i ? '' : ' on'}" aria-label="${name}"><svg width="20" height="20" viewBox="0 0 20 20">${art}</svg></button>`).join('');
```
